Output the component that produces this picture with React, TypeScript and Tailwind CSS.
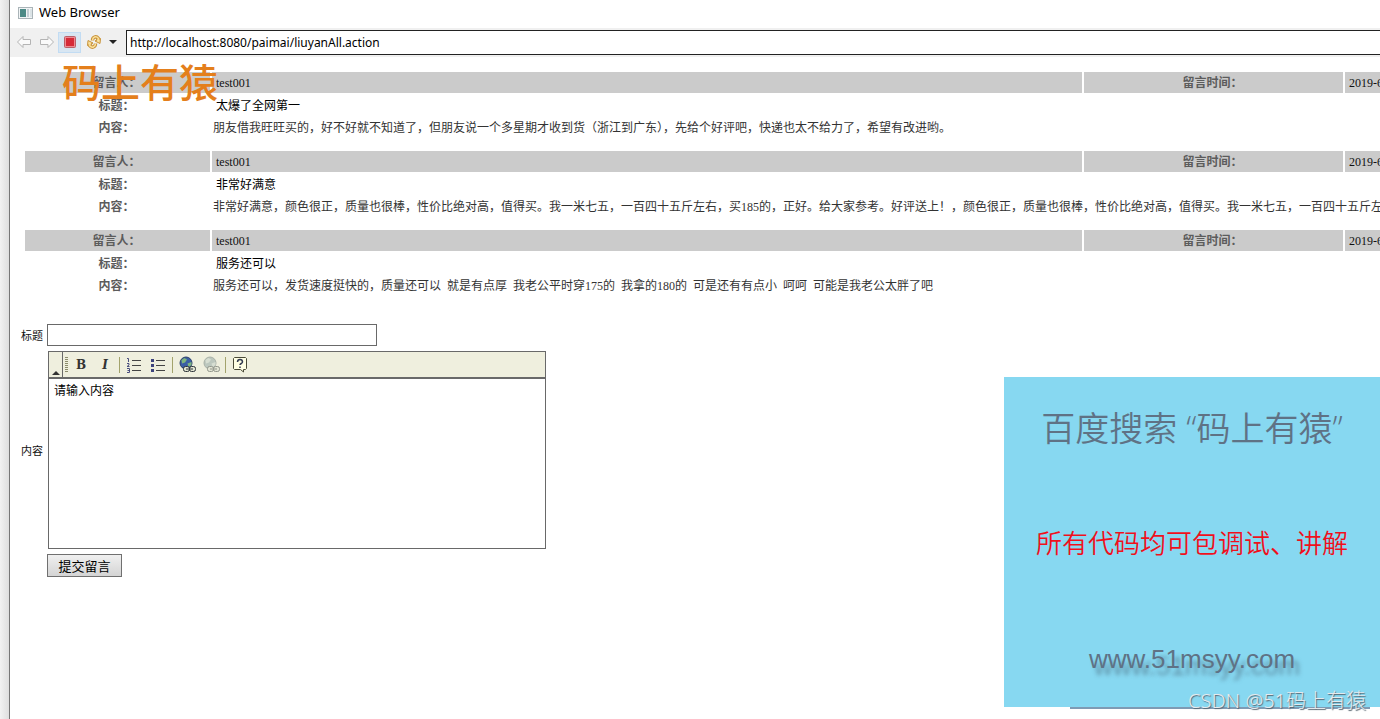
import React from "react";

const messages = [
  {
    user: "test001",
    title: "太爆了全网第一",
    body: "朋友借我旺旺买的，好不好就不知道了，但朋友说一个多星期才收到货（浙江到广东），先给个好评吧，快递也太不给力了，希望有改进哟。",
  },
  {
    user: "test001",
    title: "非常好满意",
    body: "非常好满意，颜色很正，质量也很棒，性价比绝对高，值得买。我一米七五，一百四十五斤左右，买185的，正好。给大家参考。好评送上！，颜色很正，质量也很棒，性价比绝对高，值得买。我一米七五，一百四十五斤左",
  },
  {
    user: "test001",
    title: "服务还可以",
    body: "服务还可以，发货速度挺快的，质量还可以\u2002就是有点厚\u2002我老公平时穿175的\u2002我拿的180的\u2002可是还有有点小\u2002呵呵\u2002可能是我老公太胖了吧",
  },
];

const serif = "font-['Liberation_Serif','Noto_Sans_CJK_SC',serif]";

function TitleBar() {
  return (
    <header className="flex h-7 items-center gap-1 bg-white pb-[2px] pl-2">
      <svg width="17" height="16" viewBox="0 0 17 16" aria-hidden="true">
        <rect x="0.500" y="2.500" width="14" height="11" fill="#f1f4f5" stroke="#aab4b8" />
        <rect x="2" y="4" width="6" height="8" fill="#4c8a86" />
        <rect x="9" y="4" width="2" height="8" fill="#c3ced4" />
        <rect x="12" y="4" width="2" height="8" fill="#dbe3e6" />
      </svg>
      <h1 className="font-['Noto_Sans',sans-serif] text-[13px] text-black">Web Browser</h1>
    </header>
  );
}

function AddressBar() {
  return (
    <div className="flex h-[29px] items-center bg-[#f0f0f0] pb-px pl-[2px]">
      <button aria-label="Back" className="flex h-6 w-[23px] items-center justify-center">
        <svg width="16" height="14" viewBox="0 0 16 14" fill="#fafafa" stroke="#b4b4b4">
          <path d="M1.500 7 7 1.500v3h7.500v5H7v3z" />
        </svg>
      </button>
      <button aria-label="Forward" className="flex h-6 w-[23px] items-center justify-center">
        <svg width="16" height="14" viewBox="0 0 16 14" fill="#fafafa" stroke="#b4b4b4">
          <path d="M14.500 7 9 1.500v3H1.500v5H9v3z" />
        </svg>
      </button>
      <button aria-label="Stop" className="flex h-[21px] w-[23px] items-center justify-center border border-[#c2dcf3] bg-[#d8e6f2]">
        <svg width="12" height="12" viewBox="0 0 12 12">
          <rect x="0.500" y="0.500" width="11" height="11" rx="1" fill="#ee8a92" stroke="#b8606a" />
          <rect x="2" y="2" width="8" height="8" fill="#d62a38" />
        </svg>
      </button>
      <button aria-label="Refresh" className="flex h-6 w-[26px] items-center justify-center">
        <svg width="16" height="16" viewBox="0 0 16 16" fill="none" strokeLinejoin="round">
          <g stroke="#c8933a" strokeWidth="3.500">
            <path d="M6.500 6.500C6.500 3 10 1.500 12.500 4.500L11 7.500" />
            <path d="M9.500 9.500C9.500 13 6 14.500 3.500 11.500L5 8.500" />
          </g>
          <g fill="#fbe09a" stroke="#c8933a">
            <path d="M9 7l5.500-2.500L14 9.500z" />
            <path d="M7 9l-5.500 2.500L2 6.500z" />
          </g>
          <g stroke="#fbe09a" strokeWidth="1.500">
            <path d="M6.500 6.500C6.500 3 10 1.500 12.500 4.500L11.500 7" />
            <path d="M9.500 9.500C9.500 13 6 14.500 3.500 11.500L4.500 9" />
          </g>
        </svg>
      </button>
      <button aria-label="Refresh options" className="flex h-6 w-[12px] items-center justify-center">
        <svg width="8" height="4" viewBox="0 0 8 4">
          <path d="M0 0h8L4 4z" fill="#222" />
        </svg>
      </button>
      <input
        aria-label="Address"
        defaultValue="http://localhost:8080/paimai/liuyanAll.action"
        className="ml-[7px] h-[25px] min-w-0 flex-1 border border-r-0 border-[#222] bg-white px-[3px] font-['Noto_Sans',sans-serif] text-[12px] text-black outline-none"
      />
    </div>
  );
}

function MessageTable({ user, title, body }: { user: string; title: string; body: string }) {
  return (
    <table className={`mb-3 w-full min-w-[1580px] table-fixed border-separate border-spacing-0 text-[12px] leading-[20px] text-[#111] ${serif}`}>
      <colgroup>
        <col className="w-[187px]" />
        <col className="w-[872px]" />
        <col className="w-[261px]" />
        <col />
      </colgroup>
      <tbody>
        <tr className="h-[21px] bg-[#cbcbcb]">
          <th className="border-r-2 border-white py-0 pl-0 pr-[2px] font-bold text-[#5c5c5c]">留言人：</th>
          <td className="border-r-2 border-white px-1 py-0">{user}</td>
          <th className="border-r-2 border-white py-0 pl-0 pr-[2px] font-bold text-[#5c5c5c]">留言时间：</th>
          <td className="px-1 py-0">2019-6</td>
        </tr>
        <tr className="h-6">
          <th className="pb-0 pl-0 pr-1 pt-[2px] font-bold text-[#5c5c5c]">标题：</th>
          <td colSpan={3} className="px-1 pb-0 pt-[2px] text-black">{title}</td>
        </tr>
        <tr className="h-[22px]">
          <th className="py-0 pl-0 pr-1 font-bold text-[#5c5c5c]">内容：</th>
          <td colSpan={3} className="whitespace-nowrap px-px py-0 text-[#333]">{body}</td>
        </tr>
      </tbody>
    </table>
  );
}

function Separator() {
  return <span className="mx-[2px] h-4 w-px bg-[#a3a36c]" />;
}

const tool = "flex h-6 w-6 items-center justify-center";

function Globe({ muted = false }: { muted?: boolean }) {
  return (
    <svg width="17" height="17" viewBox="0 0 17 17" fill="none">
      <circle cx="7" cy="7" r="6" fill={muted ? "#bcc7be" : "#3b5ea6"} stroke={muted ? "#a9b1a8" : "#2a3f68"} />
      <path d="M2.500 4 5.500 2l2.500 1.500L6 6.500 3 7.500zM8.500 7.500l4-1.500v3l-3 2z" fill={muted ? "#d7ded2" : "#7fb67e"} />
      <g stroke={muted ? "#93978c" : "#2c3238"} fill={muted ? "#e2e4d4" : "#dfe2d0"}>
        <rect x="4.500" y="10.500" width="6" height="5" rx="2" />
        <rect x="10.500" y="10.500" width="6" height="5" rx="2" />
        <path d="M7 13h7" />
      </g>
    </svg>
  );
}

function EditorToolbar() {
  return (
    <div role="toolbar" aria-label="内容" className="flex h-[27px] items-center border-b-2 border-[#696969] bg-[#efefde]">
      <button type="button" aria-label="Collapse" className="flex h-full w-[14px] items-end justify-center border-r border-[#696969] pb-[2px]">
        <svg width="8" height="4" viewBox="0 0 8 4">
          <path d="M0 4h8L4 0z" fill="#333" />
        </svg>
      </button>
      <svg width="6" height="16" viewBox="0 0 6 16" className="shrink-0">
        <path d="M3.500 0v16" stroke="#8c8c6c" strokeWidth="3" strokeDasharray="1 1" />
      </svg>
      <button type="button" aria-label="Bold" className={tool}>
        <span className="font-['DejaVu_Serif',serif] text-[12px] font-bold text-[#333]">B</span>
      </button>
      <button type="button" aria-label="Italic" className={tool}>
        <span className="font-['DejaVu_Serif',serif] text-[12px] font-bold italic text-[#333]">I</span>
      </button>
      <Separator />
      <button type="button" aria-label="Numbered list" className={tool}>
        <svg width="16" height="16" viewBox="0 0 16 16" fill="none">
          <path d="M6 3.500h9M6 8.500h9M6 13.500h9" stroke="#444" />
          <path d="M1 1.500h1.500V5M1 6.500h2v1.500L1 9.500h2.500M1 11.500h2.500v4H1M1.500 13.500h2" stroke="#4a4f80" />
        </svg>
      </button>
      <button type="button" aria-label="Bulleted list" className={tool}>
        <svg width="16" height="16" viewBox="0 0 16 16" fill="none">
          <path d="M6 3.500h9M6 8.500h9M6 13.500h9" stroke="#444" />
          <path d="M1 2h3v3H1zM1 7h3v3H1zM1 12h3v3H1z" fill="#3d437c" />
        </svg>
      </button>
      <Separator />
      <button type="button" aria-label="Insert link" className={tool}>
        <Globe />
      </button>
      <button type="button" aria-label="Remove link" className={tool}>
        <Globe muted />
      </button>
      <Separator />
      <button type="button" aria-label="About" className={tool}>
        <svg width="16" height="17" viewBox="0 0 16 17" fill="none">
          <path d="M2.500 1.500h11l1 1v10l-1 1h-2v2.500l-3-2.500h-6l-1-1v-10z" fill="#ffffe4" stroke="#4a4a38" />
          <path d="M5.500 6c0-3.500 5-3.500 5 0 0 1.500-2.500 1.500-2.500 3M8 10.500V12" stroke="#333a50" strokeWidth="1.500" />
        </svg>
      </button>
    </div>
  );
}

function MessageForm() {
  return (
    <form
      onSubmit={(e) => e.preventDefault()}
      className="ml-[11px] mt-[27px] grid grid-cols-[22px_1fr] items-center gap-x-1 gap-y-[5px] text-[11px] text-[#111] font-['Noto_Sans_CJK_SC',sans-serif]"
    >
      <label htmlFor="subject" className="whitespace-nowrap">标题</label>
      <input id="subject" className="h-[22px] w-[330px] border border-[#696969] bg-white px-1 outline-none" />
      <label htmlFor="body" className="whitespace-nowrap">内容</label>
      <div className="ml-px flex w-[498px] flex-col border border-[#696969]">
        <EditorToolbar />
        <textarea
          id="body"
          defaultValue="请输入内容"
          className="block h-[169px] resize-none bg-white px-[5px] py-px text-[12px] leading-[20px] text-black outline-none"
        />
      </div>
      <button
        type="submit"
        className="col-start-2 h-[23px] w-[75px] border border-[#707070] bg-linear-to-b from-[#f0f0f0] to-[#d4d4d4] text-[13px] leading-[20px] text-black"
      >
        提交留言
      </button>
    </form>
  );
}

function Promo() {
  return (
    <aside className="absolute bottom-3 right-0 flex h-[330px] w-[376px] flex-col items-center bg-[#87d8f1] pt-[26px] font-['Open_Sans','Noto_Sans_CJK_SC',sans-serif]">
      <p className="whitespace-nowrap text-[34px] leading-[50px] font-[350] text-[#5f7285]">百度搜索 “码上有猿”</p>
      <p className="mt-[70px] whitespace-nowrap text-[26px] leading-[40px] font-[350] text-[#f0101c]">所有代码均可包调试、讲解</p>
      <a
        href="#site"
        className="mt-[76px] font-['Liberation_Sans',sans-serif] text-[26px] leading-[40px] text-[#5f7285] [text-shadow:5px_7px_4px_rgba(70,100,120,0.6)]"
      >
        www.51msyy.com
      </a>
      <span className="absolute -bottom-[2px] right-[10px] h-[2px] w-[300px] bg-[#7f9bb4]" />
    </aside>
  );
}

export default function App() {
  return (
    <div className="relative flex min-h-screen w-full overflow-hidden bg-white">
      <div className="w-[10px] shrink-0 border-r border-[#777] bg-linear-to-r from-[#f2f2f2] to-[#dedede]" />
      <div className="min-w-0 flex-1">
        <TitleBar />
        <AddressBar />
        <main className="overflow-hidden pt-[15px]">
          <div className="pl-[15px]">
            {messages.map((m) => (
              <MessageTable key={m.title} {...m} />
            ))}
          </div>
          <MessageForm />
        </main>
      </div>
      <Promo />
      <p className="pointer-events-none absolute left-[62px] top-[60px] whitespace-nowrap font-['Noto_Sans_CJK_SC',sans-serif] text-[39px] leading-[40px] font-medium text-[#e47f1c]">
        码上有猿
      </p>
      <p className="pointer-events-none absolute bottom-1 right-[14px] whitespace-nowrap font-['Noto_Sans','Noto_Sans_CJK_SC',sans-serif] text-[20px] leading-[28px] font-light text-[#e4eaee] [text-shadow:1px_1px_1px_#55636e]">
        CSDN @51码上有猿
      </p>
    </div>
  );
}
